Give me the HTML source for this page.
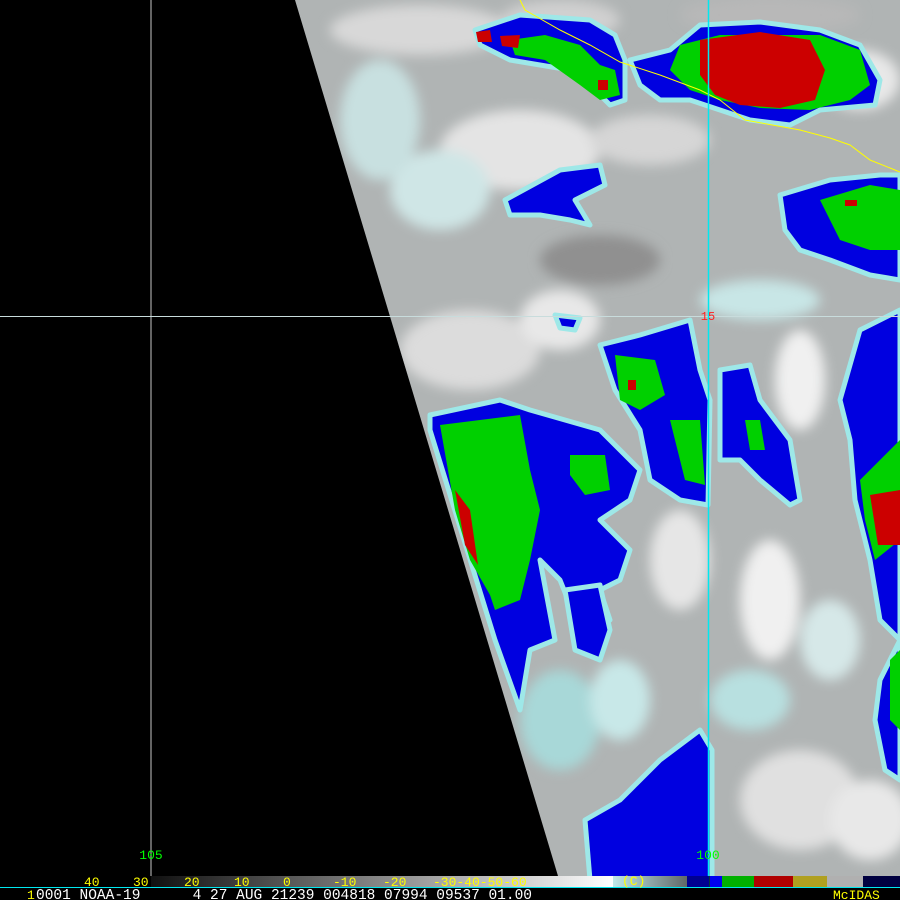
<!DOCTYPE html>
<html><head><meta charset="utf-8"><style>
html,body{margin:0;padding:0;background:#000;width:900px;height:900px;overflow:hidden}
svg{display:block}
text{font-family:"Liberation Mono",monospace;white-space:pre}
</style></head><body>
<svg width="900" height="900" viewBox="0 0 900 900" xmlns="http://www.w3.org/2000/svg">
<defs>
<clipPath id="sw"><polygon points="295,0 900,0 900,876 558,876"/></clipPath>
<filter id="bl"><feGaussianBlur stdDeviation="6"/></filter>
</defs>
<rect width="900" height="900" fill="#000"/>
<g clip-path="url(#sw)">
<rect width="900" height="876" fill="#b0b4b4"/>
<g filter="url(#bl)">
<ellipse cx="420" cy="30" rx="90" ry="25" fill="#d8d8d8"/>
<ellipse cx="560" cy="20" rx="60" ry="20" fill="#d0d0d0"/>
<ellipse cx="770" cy="15" rx="90" ry="18" fill="#b8b8b8"/>
<ellipse cx="520" cy="150" rx="80" ry="40" fill="#e4e4e4"/>
<ellipse cx="650" cy="140" rx="60" ry="25" fill="#d6d6d6"/>
<ellipse cx="440" cy="190" rx="50" ry="40" fill="#cfe6e6"/>
<ellipse cx="470" cy="350" rx="70" ry="40" fill="#dcdcdc"/>
<ellipse cx="560" cy="320" rx="40" ry="30" fill="#e8e8e8"/>
<ellipse cx="600" cy="260" rx="60" ry="25" fill="#909090"/>
<ellipse cx="800" cy="380" rx="25" ry="50" fill="#f0f0f0"/>
<ellipse cx="760" cy="300" rx="60" ry="20" fill="#c8e6e6"/>
<ellipse cx="680" cy="560" rx="30" ry="50" fill="#e6e6e6"/>
<ellipse cx="770" cy="600" rx="30" ry="60" fill="#f0f0f0"/>
<ellipse cx="830" cy="640" rx="30" ry="40" fill="#d6e8e8"/>
<ellipse cx="750" cy="700" rx="40" ry="30" fill="#b8e0e0"/>
<ellipse cx="800" cy="800" rx="60" ry="50" fill="#e0e0e0"/>
<ellipse cx="560" cy="720" rx="40" ry="50" fill="#a8d8d8"/>
<ellipse cx="620" cy="700" rx="30" ry="40" fill="#c8e8e8"/>
<ellipse cx="860" cy="80" rx="40" ry="30" fill="#e8e8e8"/>
<ellipse cx="380" cy="120" rx="40" ry="60" fill="#c8e0e0"/>
<ellipse cx="870" cy="820" rx="40" ry="40" fill="#e8e8e8"/>
</g>
<g stroke="#9ee8e8" stroke-width="5" stroke-linejoin="round">
<polygon fill="#0000e0" points="475,30 520,15 590,20 615,35 625,60 625,100 610,105 595,90 570,70 540,65 510,60 480,45"/>
<polygon fill="#0000e0" points="630,60 670,50 700,25 760,22 820,30 860,45 880,80 875,105 820,110 790,125 750,120 720,110 690,100 660,100 640,85"/>
<polygon fill="#0000e0" points="505,200 560,170 600,165 605,185 575,200 590,225 570,220 540,215 510,215"/>
<polygon fill="#0000e0" points="780,195 830,180 880,175 900,175 900,280 870,275 830,260 800,250 785,230"/>
<polygon fill="#0000e0" points="430,415 500,400 530,410 600,430 640,470 630,500 600,520 630,550 620,580 600,590 610,620 580,630 560,580 540,560 555,640 530,650 520,710 495,640 430,430"/>
<polygon fill="#0000e0" points="600,345 640,335 690,320 700,370 710,400 708,505 680,500 650,480 640,430 615,390 605,360"/>
<polygon fill="#0000e0" points="720,370 750,365 760,400 790,440 800,500 790,505 760,480 740,460 720,460"/>
<polygon fill="#0000e0" points="840,400 860,330 900,310 900,640 880,620 870,560 855,500 850,440"/>
<polygon fill="#0000e0" points="585,820 620,800 660,760 700,730 712,750 712,880 590,880"/>
<polygon fill="#0000e0" points="565,590 600,585 610,630 600,660 575,650"/>
<polygon fill="#0000e0" points="880,680 900,640 900,780 885,770 875,720"/>
<polygon fill="#0000e0" points="555,315 580,318 575,330 560,328"/>
</g>
<g fill="#00d000">
<polygon points="510,40 545,35 580,45 600,65 615,70 620,95 600,100 580,85 545,60 515,55"/>
<polygon points="680,45 720,35 820,35 860,50 870,85 850,100 810,110 760,108 720,100 690,90 670,70"/>
<polygon points="820,200 870,185 900,190 900,250 870,250 840,240"/>
<polygon points="440,425 520,415 530,470 540,510 530,560 520,600 495,610 490,595 470,560 455,510"/>
<polygon points="615,355 655,360 665,395 640,410 620,400"/>
<polygon points="670,420 700,420 705,485 685,480"/>
<polygon points="570,455 605,455 610,490 585,495 570,475"/>
<polygon points="860,480 900,440 900,540 875,560 865,520"/>
<polygon points="890,660 900,650 900,730 890,720"/>
<polygon points="745,420 760,420 765,450 750,450"/>
</g>
<g fill="#cc0000">
<polygon points="700,40 760,32 810,40 825,70 815,100 780,108 740,105 715,95 700,75"/>
<polygon points="476,32 490,30 492,42 478,42"/>
<polygon points="500,36 520,35 518,48 502,46"/>
<polygon points="455,490 470,510 478,565 465,545"/>
<polygon points="870,495 900,490 900,545 878,545"/>
<rect x="628" y="380" width="8" height="10"/>
<rect x="598" y="80" width="10" height="10"/>
<rect x="845" y="200" width="12" height="6"/>
</g>
<polyline fill="none" stroke="#ffff00" stroke-width="1" points="520,0 525,10 560,30 590,45 620,62 660,75 700,90 720,100 745,120 800,130 830,138 850,145 870,160 900,172"/>
</g>
<line x1="151" y1="0" x2="151" y2="876" stroke="#c8c8c8" stroke-width="1"/>
<line x1="0" y1="316.5" x2="900" y2="316.5" stroke="#c8dcdc" stroke-width="1"/>
<line x1="708.5" y1="0" x2="708.5" y2="887" stroke="#00e8f0" stroke-width="1.5"/>
<text x="708" y="320" fill="#ff2020" font-size="12" text-anchor="middle">15</text>
<text x="151" y="859" fill="#00ff00" font-size="13" text-anchor="middle">105</text>
<text x="708" y="859" fill="#00ff00" font-size="13" text-anchor="middle">100</text>
<defs><linearGradient id="gr" x1="0" x2="1">
<stop offset="0" stop-color="#101010"/><stop offset="0.6" stop-color="#a0a0a0"/><stop offset="1" stop-color="#ffffff"/></linearGradient>
<linearGradient id="gr2" x1="0" x2="1"><stop offset="0" stop-color="#c0e8e8"/><stop offset="1" stop-color="#606868"/></linearGradient></defs>
<rect x="151" y="876" width="462" height="11" fill="url(#gr)"/>
<rect x="613" y="876" width="74" height="11" fill="url(#gr2)"/>
<rect x="687" y="876" width="22" height="11" fill="#000090"/>
<rect x="710" y="876" width="12" height="11" fill="#0000f0"/>
<rect x="722" y="876" width="32" height="11" fill="#00b000"/>
<rect x="754" y="876" width="39" height="11" fill="#b00000"/>
<rect x="793" y="876" width="34" height="11" fill="#b0a020"/>
<rect x="827" y="876" width="36" height="11" fill="#b0b0b0"/>
<rect x="863" y="876" width="37" height="11" fill="#000040"/>
<line x1="0" y1="887.5" x2="900" y2="887.5" stroke="#00e8f0" stroke-width="1"/>
<g fill="#ffff00" font-size="13">
<text x="84" y="886">40</text><text x="133" y="886">30</text><text x="184" y="886">20</text>
<text x="234" y="886">10</text><text x="283" y="886">0</text><text x="333" y="886">-10</text>
<text x="383" y="886">-20</text><text x="433" y="886">-30-40-50-60</text>
<text x="622" y="885">(C)</text>
<text x="27" y="899">1</text>
<text x="833" y="899">McIDAS</text>
</g>
<text x="36" y="899" fill="#ffffff" font-size="14.5" xml:space="preserve">0001 NOAA-19      4 27 AUG 21239 004818 07994 09537 01.00</text>
</svg>
</body></html>
